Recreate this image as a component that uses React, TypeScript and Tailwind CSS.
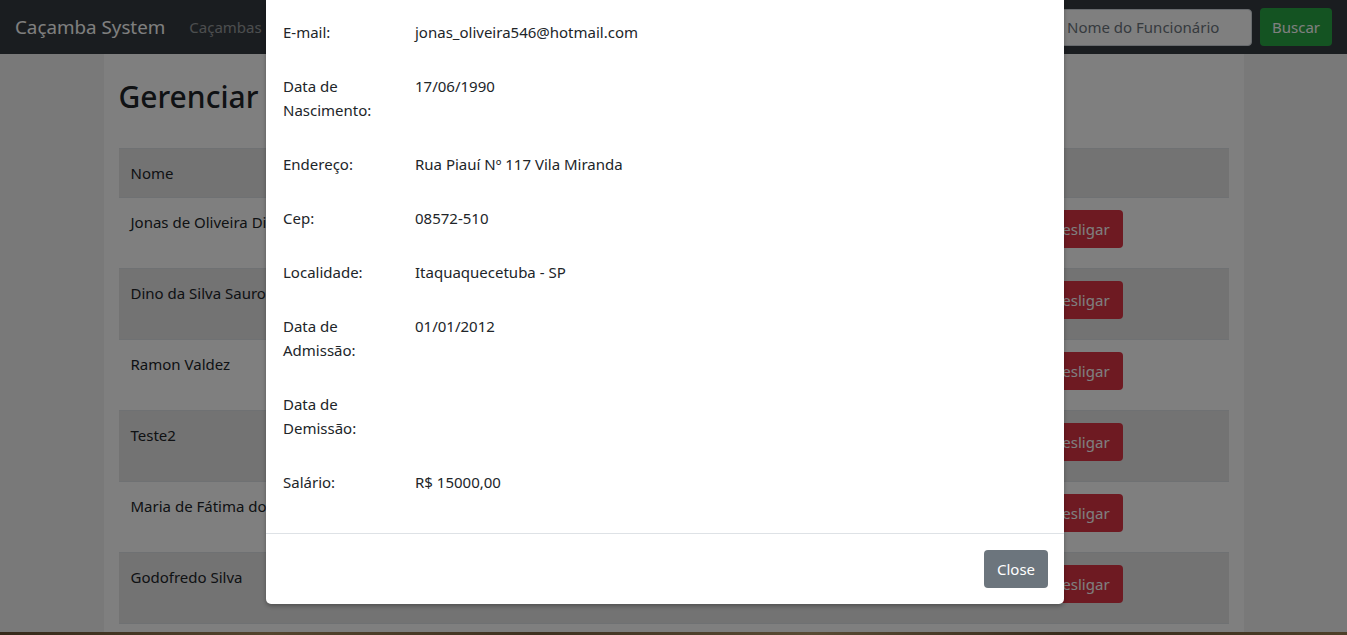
import React from 'react';

const funcionarios = [
  'Jonas de Oliveira Dias',
  'Dino da Silva Sauro',
  'Ramon Valdez',
  'Teste2',
  'Maria de Fátima dos Santos',
  'Godofredo Silva',
];

const detalhes: { label: string; value: string }[] = [
  { label: 'E-mail:', value: 'jonas_oliveira546@hotmail.com' },
  { label: 'Data de Nascimento:', value: '17/06/1990' },
  { label: 'Endereço:', value: 'Rua Piauí Nº 117 Vila Miranda' },
  { label: 'Cep:', value: '08572-510' },
  { label: 'Localidade:', value: 'Itaquaquecetuba - SP' },
  { label: 'Data de Admissão:', value: '01/01/2012' },
  { label: 'Data de Demissão:', value: '' },
  { label: 'Salário:', value: 'R$ 15000,00' },
];

const Navbar: React.FC = () => (
  <nav className="h-[54px] bg-[#343a40] flex items-center px-[15px] shrink-0">
    <span className="text-[18.8px] text-white leading-[30px]">Caçamba System</span>
    <span className="ml-[24px] text-[15px] text-white/50">Caçambas</span>
    <span className="ml-[16px] text-[15px] text-white/50">Funcionários</span>
    <div className="ml-auto flex items-center gap-[8px]">
      <input
        className="w-[198px] h-[37px] rounded-[4px] bg-white border border-[#ced4da] px-[12px] text-[15px] placeholder:text-[#6c757d]"
        placeholder="Nome do Funcionário"
      />
      <button className="h-[38px] w-[72px] rounded-[4px] bg-[#28a745] text-white text-[15px]">Buscar</button>
    </div>
  </nav>
);

const Tabela: React.FC = () => (
  <div className="border-t border-[#dee2e6]">
    <div className="h-[49px] bg-[#e6e6e6] flex items-center px-[12px] border-b border-[#dee2e6] text-[#212529]">
      Nome
    </div>
    {funcionarios.map((nome, i) => (
      <div
        key={nome}
        className={
          'h-[71px] flex justify-between items-start border-b border-[#dee2e6] px-[12px] pt-[12px] ' +
          (i % 2 === 1 ? 'bg-[#e6e6e6]' : 'bg-white')
        }
      >
        <span className="text-[#212529] leading-[24px]">{nome}</span>
        <div className="flex gap-[8px] mr-[94px]">
          <button className="h-[38px] px-[12px] rounded-[4px] bg-[#17a2b8] text-white">Visualizar</button>
          <button className="h-[38px] w-[84px] rounded-[4px] bg-[#dc3545] text-white">Desligar</button>
        </div>
      </div>
    ))}
  </div>
);

const Modal: React.FC = () => (
  <div className="absolute left-[266px] top-0 w-[798px] bg-white rounded-b-[5px] shadow-[0_2px_4px_rgba(0,0,0,0.3)] text-[#212529]">
    <div className="px-[17px] pt-[20px] pb-[9px]">
      {detalhes.map((d) => (
        <div key={d.label} className="flex mb-[30px] leading-[24px]">
          <div className="w-[132px] pr-[30px]">{d.label}</div>
          <div>{d.value}</div>
        </div>
      ))}
    </div>
    <div className="border-t border-[#dee2e6] flex justify-end px-[16px] py-[16px]">
      <button className="h-[38px] w-[64px] rounded-[4px] bg-[#6c757d] text-white">Close</button>
    </div>
  </div>
);

export default function App() {
  return (
    <div
      className="relative h-[635px] w-[1347px] overflow-hidden flex flex-col text-[15px]"
      style={{ fontFamily: '"Noto Sans", "Open Sans", sans-serif' }}
    >
      <Navbar />
      <main className="h-[578px] bg-[#f2f2f2] shrink-0">
        <div className="mx-auto w-[1140px] h-full bg-white px-[15px] pt-[24px]">
          <h2 className="text-[30px] font-medium text-[#212529] leading-[38px] mb-[32px]">Gerenciar Funcionários</h2>
          <Tabela />
        </div>
      </main>
      <div className="flex-1 bg-[linear-gradient(90deg,#6b5234,#a88a5c_20%,#7d6240_40%,#b29668_60%,#6e5636_80%,#9c7f52)]" />
      <div className="absolute inset-0 bg-black/50" />
      <Modal />
    </div>
  );
}
